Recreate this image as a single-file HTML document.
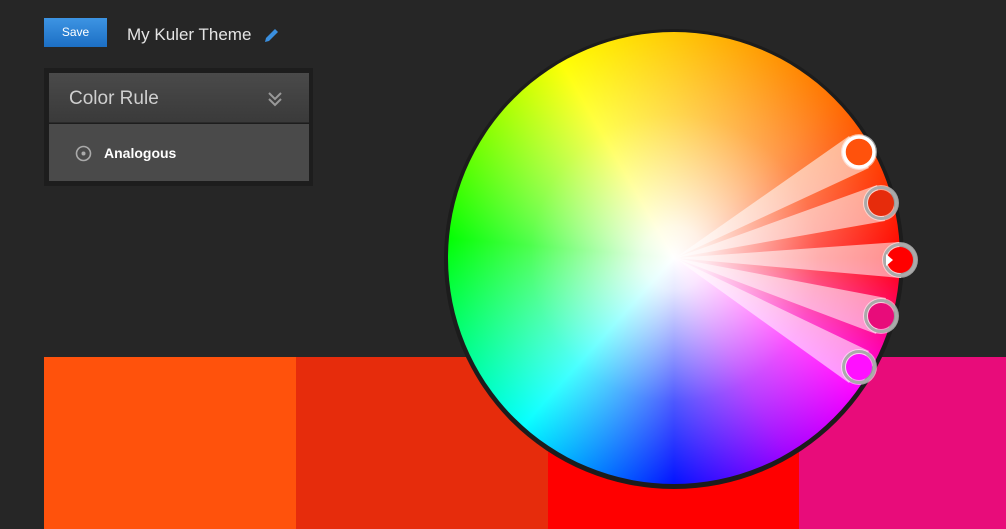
<!DOCTYPE html>
<html><head><style>
body{margin:0;width:1006px;height:529px;background:#262626;overflow:hidden;position:relative;font-family:"Liberation Sans",sans-serif}
.save{position:absolute;left:44px;top:18px;width:63px;height:29px;background:linear-gradient(#3d94e3,#1c6fc4);color:#fff;font-size:12px;line-height:29px;text-align:center}
.title{position:absolute;left:127px;top:25px;color:#e4e4e4;font-size:17px}
.panel{position:absolute;left:44px;top:68px;width:269px;height:118px;background:#1d1d1d}
.hdr{position:absolute;left:5px;top:5px;width:260px;height:49px;background:linear-gradient(#4a4a4a,#3a3a3a);border-bottom:1px solid #2a2a2a}
.hdr span{position:absolute;left:20px;top:15px;color:#cfcfcf;font-size:19px}
.body{position:absolute;left:5px;top:56px;width:260px;height:57px;background:#4a4a4a}
.body span{position:absolute;left:55px;top:21px;color:#fff;font-size:14px;font-weight:bold}
.sw{position:absolute;top:357px;height:172px}
.ring{position:absolute;left:444px;top:29px;width:460px;height:460px;border-radius:50%;background:#1c1c1c}
.wheel{position:absolute;left:448px;top:32px;width:452px;height:452px;border-radius:50%;
background:radial-gradient(circle,#fff 0%,rgba(255,255,255,.9) 10%,rgba(255,255,255,.3) 45%,rgba(255,255,255,0) 72%),
conic-gradient(#ffc800 0deg,#ff7000 45deg,#ff0000 90deg,#ff00ff 125deg,#a000ff 150deg,#0010ff 180deg,#00ffff 222deg,#00ff00 275deg,#ffff00 330deg,#ffc800 360deg)}
</style></head><body>
<div class="save">Save</div>
<div class="title">My Kuler Theme</div>
<svg style="position:absolute;left:262px;top:27px" width="18" height="18" viewBox="0 0 18 18"><path d="M3 15 L4 11 L13 2 L16 5 L7 14 Z" fill="#3a8fdf"/></svg>
<div class="panel"><div class="hdr"><span>Color Rule</span>
<svg style="position:absolute;left:218px;top:18px" width="16" height="16" viewBox="0 0 16 16"><path d="M2 2 L8 8 L14 2 M2 8 L8 14 L14 8" stroke="#999" stroke-width="2" fill="none"/></svg></div>
<div class="body"><svg style="position:absolute;left:26px;top:21px" width="17" height="17"><circle cx="8.5" cy="8.5" r="7" stroke="#aaa" stroke-width="1.6" fill="none"/><circle cx="8.5" cy="8.5" r="2" fill="#aaa"/></svg><span>Analogous</span></div></div>
<div class="sw" style="left:44px;width:252px;background:#ff520c"></div>
<div class="sw" style="left:296px;width:252px;background:#e62c0c"></div>
<div class="sw" style="left:548px;width:251px;background:#ff0000"></div>
<div class="sw" style="left:799px;width:207px;background:#e80c7a"></div>
<div class="ring"></div>
<div class="wheel"></div>
<svg style="position:absolute;left:0;top:0" width="1006" height="529">
<g fill="#fff" fill-opacity=".55">
<polygon points="675,258 849,136 869,168"/><circle cx="859" cy="152" r="18"/>
<polygon points="675,258 877,185 885,221"/><circle cx="881" cy="203" r="18"/>
<polygon points="675,258 899,242 901,278"/><circle cx="900" cy="260" r="18"/>
<polygon points="675,258 886,298 876,334"/><circle cx="881" cy="316" r="18"/>
<polygon points="675,258 869,351 849,383"/><circle cx="859" cy="367" r="18"/>
</g>
<circle cx="859" cy="152" r="15" fill="#ff520c" stroke="#fff" stroke-width="3.5"/>
<circle cx="881" cy="203" r="13" fill="#e62c0c"/><circle cx="881" cy="203" r="15.5" fill="none" stroke="#aaa" stroke-width="3"/>
<circle cx="900" cy="260" r="13" fill="#ff0000"/><circle cx="900" cy="260" r="15.5" fill="none" stroke="#aaa" stroke-width="3"/>
<polygon points="886,254 893,260 886,266" fill="#fff"/>
<circle cx="881" cy="316" r="13" fill="#e80c7a"/><circle cx="881" cy="316" r="15.5" fill="none" stroke="#aaa" stroke-width="3"/>
<circle cx="859" cy="367" r="13" fill="#ff10ff"/><circle cx="859" cy="367" r="15.5" fill="none" stroke="#aaa" stroke-width="3"/>
</svg>
</body></html>
